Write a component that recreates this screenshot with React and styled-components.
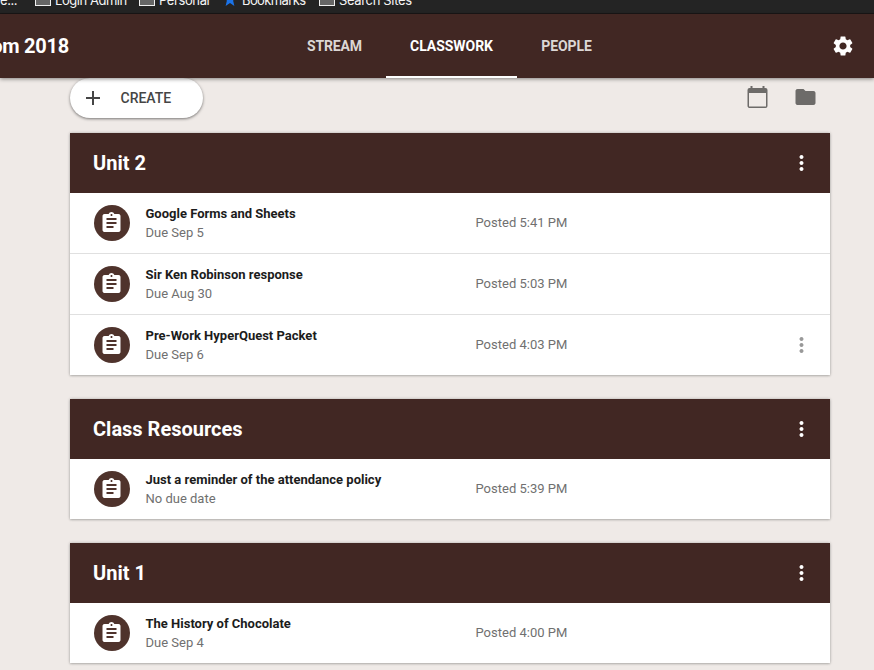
import styled, { createGlobalStyle } from "styled-components";
import {
  MdAdd,
  MdAssignment,
  MdFolder,
  MdMoreVert,
  MdSettings,
} from "react-icons/md";

const GlobalStyle = createGlobalStyle`
  body {
    margin: 0;
    background: #efeae7;
    font-family: Roboto, "Liberation Sans", sans-serif;
    overflow: hidden;
  }
`;

const Page = styled.div`
  height: 670px;
  overflow: hidden;
`;

const BookmarksBar = styled.div`
  box-sizing: border-box;
  height: 14px;
  display: flex;
  align-items: flex-end;
  padding-bottom: 5px;
  overflow: hidden;
  background: #242424;
  border-bottom: 1px solid #1a1717;
`;

const Bookmark = styled.div`
  flex: none;
  display: flex;
  align-items: flex-end;
  box-sizing: border-box;
  width: ${(props) => props.$width}px;
  height: 16px;
  color: #f4f4f4;
  font-family: Inter, sans-serif;
  font-size: 13px;
  line-height: 16px;
  letter-spacing: ${(props) => props.$spacing || 0}px;
  white-space: nowrap;
`;

const FolderBox = styled.div`
  box-sizing: border-box;
  width: 16px;
  height: 14px;
  margin: 0 4px 2px 0;
  border: 1px solid #f0f0f0;
  background: #666;
`;

const Star = styled.svg`
  width: 14px;
  height: 14px;
  margin: 0 5px 2px 0;
  fill: #1a73e8;
`;

const Header = styled.header`
  position: relative;
  z-index: 1;
  height: 64px;
  display: grid;
  grid-template-columns: 283px 1fr 43px;
  background: #412723;
  box-shadow: 0 1px 4px rgba(0, 0, 0, 0.45);
`;

const ClassName = styled.h1`
  justify-self: start;
  width: 69px;
  margin: 0;
  display: flex;
  justify-content: flex-end;
  color: #fff;
  font-size: 20px;
  font-weight: 700;
  line-height: 64px;
  letter-spacing: -0.25px;
  white-space: nowrap;
`;

const Tabs = styled.nav`
  display: flex;
`;

const Tab = styled.div`
  box-sizing: border-box;
  width: ${(props) => props.$width}px;
  height: 64px;
  border-bottom: 2px solid ${(props) => (props.$active ? "#fff" : "transparent")};
  color: ${(props) => (props.$active ? "#fff" : "#dcd7d5")};
  font-size: 14px;
  font-weight: 700;
  line-height: 64px;
  letter-spacing: ${(props) => props.$spacing}px;
  text-align: center;
`;

const HeaderAction = styled.div`
  height: 63px;
  display: flex;
  align-items: center;
  color: #fff;
`;

const Content = styled.main`
  width: 760px;
  margin-left: 70px;
`;

const Toolbar = styled.div`
  display: flex;
  justify-content: space-between;
  height: 55px;
`;

const CreateButton = styled.button`
  box-sizing: border-box;
  width: 133px;
  height: 40px;
  display: flex;
  align-items: center;
  gap: 16px;
  padding: 0 0 0 10.5px;
  border: 0;
  border-radius: 20px;
  background: #fff;
  box-shadow: 0 1px 3px rgba(0, 0, 0, 0.5);
  color: #454545;
  font-family: inherit;
  font-size: 14px;
  font-weight: 500;
  letter-spacing: 0;
`;

const ToolbarIcons = styled.div`
  height: 38px;
  display: flex;
  align-items: center;
  gap: 24px;
  padding-right: 13px;
  color: #6d6b69;

  & > svg {
    transform: translateX(0.5px);
  }
`;

const MenuIcon = styled(MdMoreVert)`
  transform: translateX(0.5px);
`;

const Card = styled.section`
  margin-bottom: 24px;
  background: #fff;
  box-shadow: 0 0 3px rgba(0, 0, 0, 0.24), 0 1px 2px rgba(0, 0, 0, 0.16);
`;

const CardHeader = styled.div`
  height: 60px;
  display: flex;
  align-items: center;
  justify-content: space-between;
  padding: 0 17px 0 23px;
  background: #412723;
  color: #fff;
`;

const CardTitle = styled.h2`
  margin: 0;
  font-size: 20px;
  font-weight: 700;
  letter-spacing: 0;
`;

const Row = styled.div`
  height: 60px;
  display: grid;
  grid-template-columns: 36px 314px 1fr auto;
  column-gap: 16px;
  align-items: center;
  padding: 0 17px 0 24px;

  & + & {
    border-top: 1px solid #e0e0e0;
  }
`;

const RowIcon = styled.div`
  width: 36px;
  height: 36px;
  display: flex;
  align-items: center;
  justify-content: center;
  border-radius: 50%;
  background: #4f332c;
  color: #fff;

  & > svg {
    transform: translateX(-0.5px);
  }
`;

const RowText = styled.div`
  margin-left: -0.5px;
`;

const RowTitle = styled.div`
  color: #1c1c1c;
  font-size: 13px;
  font-weight: 700;
  line-height: 19px;
`;

const RowMeta = styled.div`
  color: #707070;
  font-size: 13px;
  line-height: 19px;
`;

const RowPosted = styled(RowMeta)`
  margin: 0 0 2px -0.5px;
`;

const units = [
  {
    title: "Unit 2",
    items: [
      { title: "Google Forms and Sheets", due: "Due Sep 5", posted: "5:41 PM" },
      { title: "Sir Ken Robinson response", due: "Due Aug 30", posted: "5:03 PM" },
      { title: "Pre-Work HyperQuest Packet", due: "Due Sep 6", posted: "4:03 PM", menu: true },
    ],
  },
  {
    title: "Class Resources",
    items: [
      { title: "Just a reminder of the attendance policy", due: "No due date", posted: "5:39 PM" },
    ],
  },
  {
    title: "Unit 1",
    items: [
      { title: "The History of Chocolate", due: "Due Sep 4", posted: "4:00 PM" },
    ],
  },
];

function CalendarIcon() {
  return (
    <svg width="24" height="24" viewBox="0 0 24 24" fill="currentColor">
      <path d="M20 3h-1V1h-2v2H7V1H5v2H4a2 2 0 0 0-2 2v16c0 1.100.9 2 2 2h16a2 2 0 0 0 2-2V5a2 2 0 0 0-2-2zm.5 18.500h-17V8h17v13.500z" />
    </svg>
  );
}

function Assignment({ item }) {
  return (
    <Row>
      <RowIcon>
        <MdAssignment size={24} />
      </RowIcon>
      <RowText>
        <RowTitle>{item.title}</RowTitle>
        <RowMeta>{item.due}</RowMeta>
      </RowText>
      <RowPosted>Posted {item.posted}</RowPosted>
      {item.menu && <MenuIcon size={24} color="#999" />}
    </Row>
  );
}

function App() {
  return (
    <Page>
      <GlobalStyle />
      <BookmarksBar>
        <Bookmark $width={35} $spacing={-0.4}>e...</Bookmark>
        <Bookmark $width={104} $spacing={-0.45}>
          <FolderBox />
          Login Admin
        </Bookmark>
        <Bookmark $width={84} $spacing={-0.4}>
          <FolderBox />
          Personal
        </Bookmark>
        <Bookmark $width={96} $spacing={-0.6}>
          <Star viewBox="0 0 24 24">
            <path d="M12 0l3.300 8.300 8.700.6-6.700 5.700L19.500 24 12 18.900 4.500 24l2.200-9.400L0 8.900l8.700-.6z" />
          </Star>
          Bookmarks
        </Bookmark>
        <Bookmark $width={110} $spacing={-0.35}>
          <FolderBox />
          Search Sites
        </Bookmark>
      </BookmarksBar>
      <Header>
        <ClassName>Classroom 2018</ClassName>
        <Tabs>
          <Tab $width={103} $spacing={-0.15}>STREAM</Tab>
          <Tab $width={131} $spacing={-0.05} $active>CLASSWORK</Tab>
          <Tab $width={99} $spacing={-0.1}>PEOPLE</Tab>
        </Tabs>
        <HeaderAction>
          <MdSettings size={24} />
        </HeaderAction>
      </Header>
      <Content>
        <Toolbar>
          <CreateButton>
            <MdAdd size={24} />
            CREATE
          </CreateButton>
          <ToolbarIcons>
            <CalendarIcon />
            <MdFolder size={24} />
          </ToolbarIcons>
        </Toolbar>
        {units.map((unit) => (
          <Card key={unit.title}>
            <CardHeader>
              <CardTitle>{unit.title}</CardTitle>
              <MenuIcon size={24} />
            </CardHeader>
            {unit.items.map((item) => (
              <Assignment key={item.title} item={item} />
            ))}
          </Card>
        ))}
      </Content>
    </Page>
  );
}

export default App;
